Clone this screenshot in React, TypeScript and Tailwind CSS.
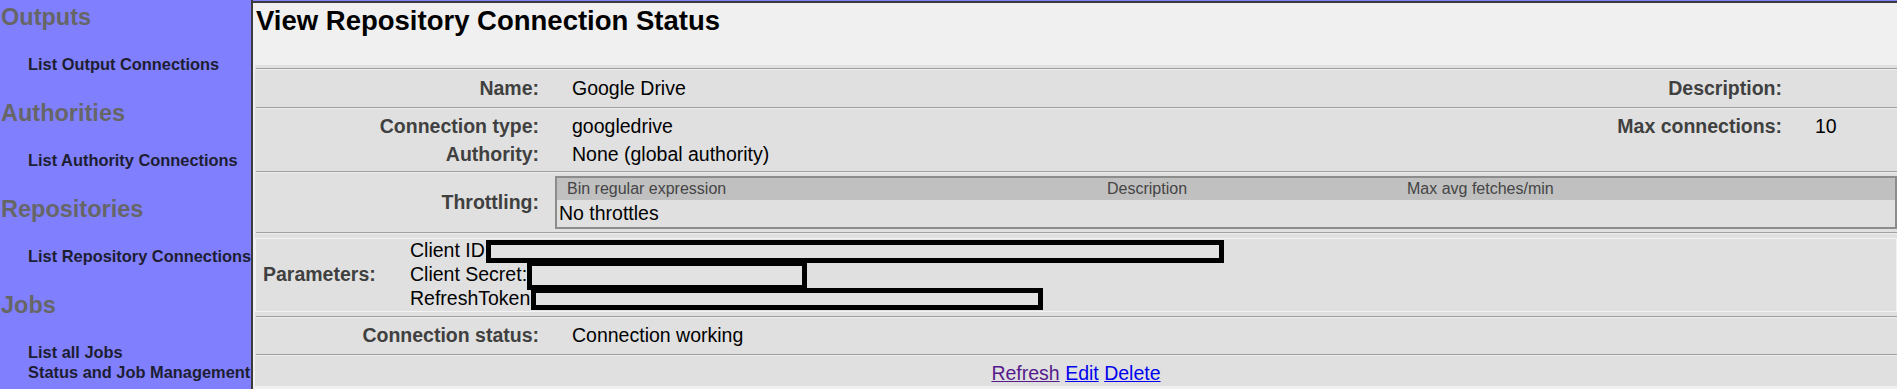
import React from "react";

const sections = [
  { title: "Outputs", links: ["List Output Connections"] },
  { title: "Authorities", links: ["List Authority Connections"] },
  { title: "Repositories", links: ["List Repository Connections"] },
  { title: "Jobs", links: ["List all Jobs", "Status and Job Management"] },
];

function Rule() {
  return <div className="ml-px h-[2px] border-t border-b border-t-[#a0a0a0] border-b-[#ececec]" />;
}

function Label({ children }: { children?: React.ReactNode }) {
  return <div className="w-[284px] shrink-0 text-right font-bold text-[#404040]">{children}</div>;
}

function Sidebar() {
  return (
    <div className="w-[253px] shrink-0 border-r-2 border-[#3c3c3c] bg-[#8080ff]">
      {sections.map((s, i) => (
        <div key={s.title} className={i > 0 ? "mt-[22px]" : ""}>
          <div className="pl-px text-[23.5px] font-bold leading-[34px] text-[#666666]">{s.title}</div>
          <div className="mt-[20px] pl-[28px]">
            {s.links.map((l) => (
              <div key={l} className="whitespace-nowrap text-[16.4px] font-bold leading-[20px] text-[#1e1e32]">
                {l}
              </div>
            ))}
          </div>
        </div>
      ))}
    </div>
  );
}

function ParamRow({ name, box, h, w }: { name: string; box: number; h: string; w: string }) {
  return (
    <div className="flex h-[24px] items-center">
      <span className="whitespace-nowrap">{name}</span>
      <div className={`${h} ${w} shrink-0 border-[5px] border-black bg-[#e2e2e2]`} style={{ marginLeft: box }} />
    </div>
  );
}

export default function App() {
  return (
    <div
      className="flex h-[389px] w-[1897px] overflow-hidden bg-[#8080ff] text-[19.5px] text-black"
      style={{ fontFamily: '"Liberation Sans", Arial, sans-serif' }}
    >
      <Sidebar />
      <div className="mt-px flex min-w-0 flex-1 flex-col border-t-2 border-[#3c3c3c] bg-[#f0f0f0]">
        <div className="h-[62px] pl-[3px] pt-[2px] text-[27.5px] font-bold leading-[32px]">
          View Repository Connection Status
        </div>

        <div className="ml-[2px] bg-[#e0e0e0]">
          <div className="h-[3px]" />
          <Rule />

          <div className="flex h-[37px] items-center">
            <Label>Name:</Label>
            <div className="flex-1 pl-[33px]">Google Drive</div>
            <div className="text-right font-bold text-[#404040]">Description:</div>
            <div className="w-[115px] pl-[33px]" />
          </div>
          <Rule />

          <div className="py-[3px] leading-[28px]">
            <div className="flex">
              <Label>Connection type:</Label>
              <div className="flex-1 pl-[33px]">googledrive</div>
              <div className="text-right font-bold text-[#404040]">Max connections:</div>
              <div className="w-[115px] pl-[33px]">10</div>
            </div>
            <div className="flex">
              <Label>Authority:</Label>
              <div className="flex-1 pl-[33px]">None (global authority)</div>
            </div>
          </div>
          <Rule />

          <div className="flex items-center py-[3px]">
            <Label>Throttling:</Label>
            <div className="ml-[16px] flex-1 border-2 border-[#8c8c8c]">
              <div className="grid h-[22px] grid-cols-[540px_300px_1fr] bg-[#c0c0c0] text-[16px] leading-[22px] text-[#454545]">
                <div className="pl-[10px]">Bin regular expression</div>
                <div className="pl-[10px]">Description</div>
                <div className="pl-[10px]">Max avg fetches/min</div>
              </div>
              <div className="h-[27px] pl-[2px] leading-[27px]">No throttles</div>
            </div>
          </div>
          <Rule />

          <div className="mt-[4px] flex items-center border border-[#f2f2f2]">
            <div className="w-[154px] shrink-0 pl-[7px] font-bold text-[#404040]">Parameters:</div>
            <div className="flex-1">
              <ParamRow name="Client ID:" box={-4} h="h-[23px]" w="w-[738px]" />
              <ParamRow name="Client Secret:" box={0} h="h-[29px]" w="w-[280px]" />
              <ParamRow name="RefreshToken" box={1} h="h-[22px]" w="w-[512px]" />
            </div>
          </div>
          <div className="h-[4px]" />
          <Rule />

          <div className="flex h-[36px] items-center">
            <Label>Connection status:</Label>
            <div className="flex-1 pl-[33px]">Connection working</div>
          </div>
          <Rule />

          <div className="h-[30px] pt-[4px] text-center leading-[26px]">
            <a href="#" className="text-[#551a8b] underline">Refresh</a>{" "}
            <a href="#" className="text-[#0000ee] underline">Edit</a>{" "}
            <a href="#" className="text-[#0000ee] underline">Delete</a>
          </div>
        </div>
      </div>
    </div>
  );
}
